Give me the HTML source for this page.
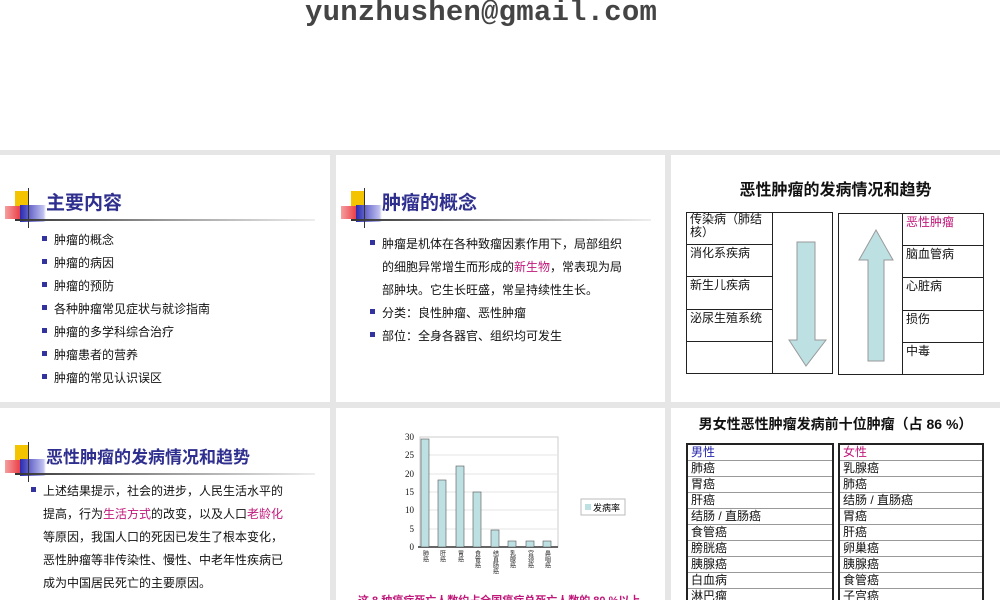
<!DOCTYPE html>
<html><head><meta charset="utf-8"><style>
*{margin:0;padding:0;box-sizing:border-box}
body{width:1000px;height:600px;overflow:hidden;background:#e6e6e6;position:relative;font-family:"Liberation Sans","Noto Sans CJK SC",sans-serif;color:#111}
.top{position:absolute;left:0;top:0;width:1000px;height:150px;background:#fff}
.mail{position:absolute;left:305px;top:-4px;font:bold 29px "Liberation Mono",monospace;color:#444;letter-spacing:0.2px;white-space:nowrap}
.p{position:absolute;background:#fff;overflow:hidden}
.logo{position:absolute;width:320px;height:50px}
.logo .y{position:absolute;left:15px;top:3px;width:14px;height:15px;background:#f5c400}
.logo .r{position:absolute;left:5px;top:18px;width:20px;height:13px;background:linear-gradient(90deg,#f4a0a0,#e8202a)}
.logo .b{position:absolute;left:20px;top:17px;width:26px;height:17px;background:linear-gradient(90deg,#2a2ab0,#c0c0f0 90%,transparent)}
.logo .v{position:absolute;left:28px;top:0;width:1px;height:40px;background:#333}
.logo .h{position:absolute;left:15px;top:31px;width:300px;height:2px;background:linear-gradient(90deg,#333,#999 50%,#eee)}
.logo .t{position:absolute;left:46px;top:0px;font-size:19px;font-weight:bold;color:#2f2f8f;white-space:nowrap}
ul{list-style:none;position:absolute}
li{position:relative;font-size:12px;white-space:nowrap}
li:before{content:"";position:absolute;left:-12px;top:7px;width:5px;height:5px;background:#3333a0}
.pk{color:#c0187a}
table{border-collapse:collapse;position:absolute;font-size:12px}
td{border:1px solid #222;vertical-align:top;padding:0 3px}
.t2 td{border:1px solid #999;padding:0 3px;height:16px;line-height:15px}
.t2{border:2px solid #222}
</style></head><body>
<div class="top"><div class="mail">yunzhushen@gmail.com</div></div>

<div class="p" style="left:0;top:155px;width:330px;height:247px">
 <div class="logo" style="left:0;top:33px"><div class="y"></div><div class="r"></div><div class="b"></div><div class="v"></div><div class="h"></div><div class="t">主要内容</div></div>
 <ul style="left:54px;top:74px;line-height:23px">
  <li>肿瘤的概念</li><li>肿瘤的病因</li><li>肿瘤的预防</li><li>各种肿瘤常见症状与就诊指南</li><li>肿瘤的多学科综合治疗</li><li>肿瘤患者的营养</li><li>肿瘤的常见认识误区</li>
 </ul>
</div>

<div class="p" style="left:336px;top:155px;width:329px;height:247px">
 <div class="logo" style="left:0;top:33px"><div class="y"></div><div class="r"></div><div class="b"></div><div class="v"></div><div class="h"></div><div class="t">肿瘤的概念</div></div>
 <ul style="left:46px;top:78px;line-height:23px">
  <li>肿瘤是机体在各种致瘤因素作用下，局部组织<br>的细胞异常增生而形成的<span class="pk">新生物</span>，常表现为局<br>部肿块。它生长旺盛，常呈持续性生长。</li>
  <li>分类：良性肿瘤、恶性肿瘤</li><li>部位：全身各器官、组织均可发生</li>
 </ul>
</div>

<div class="p" style="left:671px;top:155px;width:329px;height:247px">
 <div style="position:absolute;left:0;width:329px;top:21px;text-align:center;font-size:16px;font-weight:bold">恶性肿瘤的发病情况和趋势</div>
 <table style="left:15px;top:57px;width:147px;height:162px;line-height:13px">
  <tr><td style="width:86px;height:32px">传染病（肺结核）</td><td rowspan="5"></td></tr>
  <tr><td style="height:32px;padding-top:2px">消化系疾病</td></tr>
  <tr><td style="height:32px;padding-top:2px">新生儿疾病</td></tr>
  <tr><td style="height:32px;padding-top:2px">泌尿生殖系统</td></tr>
  <tr><td style="height:32px"></td></tr>
 </table>
 <svg style="position:absolute;left:117px;top:84px" width="40" height="130"><path d="M9 3 H27 V101 H38 L18 127 L1 101 H9 Z" fill="#bde0e3" stroke="#999"/></svg>
 <table style="left:167px;top:58px;width:146px;height:162px;line-height:13px">
  <tr><td rowspan="5" style="width:64px"></td><td style="height:32px;padding-top:2px" class="pk">恶性肿瘤</td></tr>
  <tr><td style="height:32px;padding-top:2px">脑血管病</td></tr>
  <tr><td style="height:32px;padding-top:2px">心脏病</td></tr>
  <tr><td style="height:32px;padding-top:2px">损伤</td></tr>
  <tr><td style="height:32px;padding-top:2px">中毒</td></tr>
 </table>
 <svg style="position:absolute;left:187px;top:73px" width="40" height="135"><path d="M18 2 L35 32 H26 V133 H10 V32 H1 Z" fill="#bde0e3" stroke="#999"/></svg>
</div>

<div class="p" style="left:0;top:408px;width:330px;height:192px">
 <div class="logo" style="left:0;top:34px"><div class="y"></div><div class="r"></div><div class="b"></div><div class="v"></div><div class="h"></div><div class="t" style="font-size:17px;top:1px">恶性肿瘤的发病情况和趋势</div></div>
 <ul style="left:43px;top:72px;line-height:23px">
  <li>上述结果提示，社会的进步，人民生活水平的<br>提高，行为<span class="pk">生活方式</span>的改变，以及人口<span class="pk">老龄化</span><br>等原因，我国人口的死因已发生了根本变化，<br>恶性肿瘤等非传染性、慢性、中老年性疾病已<br>成为中国居民死亡的主要原因。</li>
 </ul>
</div>

<div class="p" style="left:336px;top:408px;width:329px;height:192px">
 <svg width="329" height="192" style="position:absolute;left:0;top:0" font-family="Liberation Serif" font-size="9">
  <rect x="84" y="29" width="138" height="110" fill="none" stroke="#ccc"/>
  <g stroke="#e4e4e4"><line x1="84" y1="47" x2="222" y2="47"/><line x1="84" y1="66" x2="222" y2="66"/><line x1="84" y1="84" x2="222" y2="84"/><line x1="84" y1="102" x2="222" y2="102"/><line x1="84" y1="121" x2="222" y2="121"/></g>
  <g text-anchor="end" fill="#111"><text x="78" y="32">30</text><text x="78" y="50">25</text><text x="78" y="69">20</text><text x="78" y="87">15</text><text x="78" y="105">10</text><text x="78" y="124">5</text><text x="78" y="142">0</text></g>
  <line x1="82" y1="139" x2="222" y2="139" stroke="#666" stroke-width="2"/>
  <g fill="#bde0e3" stroke="#555" stroke-width="0.6">
   <rect x="85" y="31" width="8" height="108"/><rect x="102" y="72" width="8" height="67"/><rect x="120" y="58" width="8" height="81"/><rect x="137" y="84" width="8" height="55"/><rect x="155" y="122" width="8" height="17"/><rect x="172" y="133" width="8" height="6"/><rect x="190" y="133" width="8" height="6"/><rect x="207" y="133" width="8" height="6"/>
  </g>
  <g font-family="Noto Sans CJK SC" font-size="6" fill="#222" writing-mode="tb">
   <text x="90" y="142">肺癌</text><text x="107" y="142">肝癌</text><text x="125" y="142">胃癌</text><text x="142" y="142">食管癌</text><text x="160" y="142">结直肠癌</text><text x="177" y="142">乳腺癌</text><text x="195" y="142">宫颈癌</text><text x="212" y="142">鼻咽癌</text>
  </g>
  <rect x="245" y="91" width="44" height="16" fill="#fff" stroke="#bbb"/>
  <rect x="249" y="96" width="6" height="6" fill="#bde0e3"/>
  <text x="257" y="103" font-family="Noto Sans CJK SC" font-size="9">发病率</text>
 </svg>
 <div style="position:absolute;left:22px;top:184px;font-size:11px;font-weight:bold;color:#c0187a;white-space:nowrap">这 8 种癌症死亡人数约占全国癌症总死亡人数的 80 %以上</div>
</div>

<div class="p" style="left:671px;top:408px;width:329px;height:192px">
 <div style="position:absolute;left:0;width:329px;top:6px;text-align:center;font-size:14px;font-weight:bold">男女性恶性肿瘤发病前十位肿瘤（占 86 %）</div>
 <table class="t2" style="left:15px;top:35px;width:148px">
  <tr><td style="color:#2222aa">男性</td></tr><tr><td>肺癌</td></tr><tr><td>胃癌</td></tr><tr><td>肝癌</td></tr><tr><td>结肠 / 直肠癌</td></tr><tr><td>食管癌</td></tr><tr><td>膀胱癌</td></tr><tr><td>胰腺癌</td></tr><tr><td>白血病</td></tr><tr><td>淋巴瘤</td></tr>
 </table>
 <table class="t2" style="left:167px;top:35px;width:146px">
  <tr><td class="pk">女性</td></tr><tr><td>乳腺癌</td></tr><tr><td>肺癌</td></tr><tr><td>结肠 / 直肠癌</td></tr><tr><td>胃癌</td></tr><tr><td>肝癌</td></tr><tr><td>卵巢癌</td></tr><tr><td>胰腺癌</td></tr><tr><td>食管癌</td></tr><tr><td>子宫癌</td></tr>
 </table>
</div>
</body></html>
